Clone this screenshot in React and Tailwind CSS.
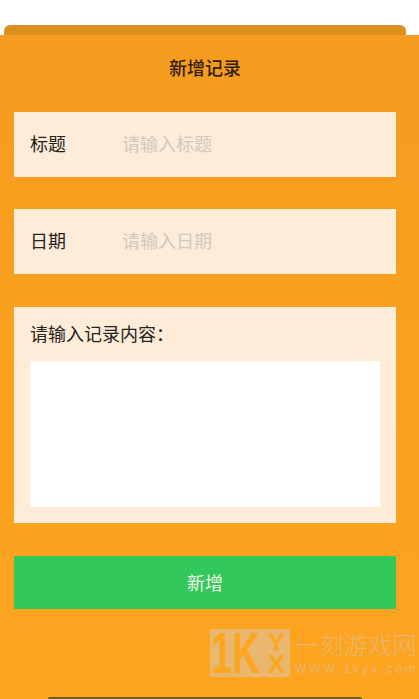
const font = '[font-family:"Noto_Sans_CJK_SC","Liberation_Sans",sans-serif]';

function Field({ label, placeholder }) {
  return (
    <div className="flex h-[65px] items-center bg-[#fdecd8] pb-[2px] pl-4">
      <span className="w-[92px] shrink-0 text-[18px] text-[#26221c]">{label}</span>
      <span className="text-[18px] text-[#cfc9c0]">{placeholder}</span>
    </div>
  );
}

function Watermark() {
  return (
    <div className="absolute left-[210px] top-[629px] flex items-start gap-[5px]">
      <div className="flex h-[48px] w-[80px] items-center bg-[#e9b76f] pl-[1px] font-bold text-[#fda51f] [font-family:'Liberation_Sans',sans-serif]">
        <span className="w-[53px] shrink-0 origin-left scale-x-[0.66] text-[58px] leading-[48px]">1K</span>
        <span className="flex w-[25px] shrink-0 flex-col text-center text-[26px] leading-[22px]">
          <span>Y</span>
          <span>X</span>
        </span>
      </div>
      <div className="flex flex-col text-[#e9b76f]">
        <span className="whitespace-nowrap text-[24px] font-light leading-[30px] tracking-[0.4px]">一刻游戏网</span>
        <span className="mt-[2px] whitespace-nowrap text-[12px] leading-[16px] tracking-[3px] [font-family:'Liberation_Sans',sans-serif]">WWW.1kyx.com</span>
      </div>
    </div>
  );
}

export default function App() {
  return (
    <div className={`relative flex h-[699px] w-[419px] flex-col overflow-hidden bg-white pt-[25px] ${font}`}>
      <div className="ml-[4px] h-[10px] w-[402px] shrink-0 rounded-t-[6px] bg-[#d9901f]" />
      <div className="flex flex-1 flex-col bg-gradient-to-b from-[#f59c1f] to-[#fda51f] pl-[14px] pr-[23px]">
        <h1 className="h-[77px] pt-[19px] text-center text-[18px] font-medium leading-[26px] text-[#33200a]">新增记录</h1>
        <Field label="标题" placeholder="请输入标题" />
        <div className="h-[32px]" />
        <Field label="日期" placeholder="请输入日期" />
        <div className="mt-[33px] flex h-[216px] flex-col bg-[#fdecd8] px-4 pt-[13px]">
          <p className="h-[41px] text-[18px] leading-[26px] text-[#26221c]">请输入记录内容：</p>
          <div className="h-[146px] bg-white" />
        </div>
        <button type="button" className="mt-[33px] h-[53px] bg-[#34c75c] text-[18px] text-[#eef7e4]">
          新增
        </button>
      </div>
      <Watermark />
      <div className="absolute bottom-0 left-[48px] h-[2px] w-[314px] rounded-t-[6px] bg-[#6b5a2c]" />
    </div>
  );
}
